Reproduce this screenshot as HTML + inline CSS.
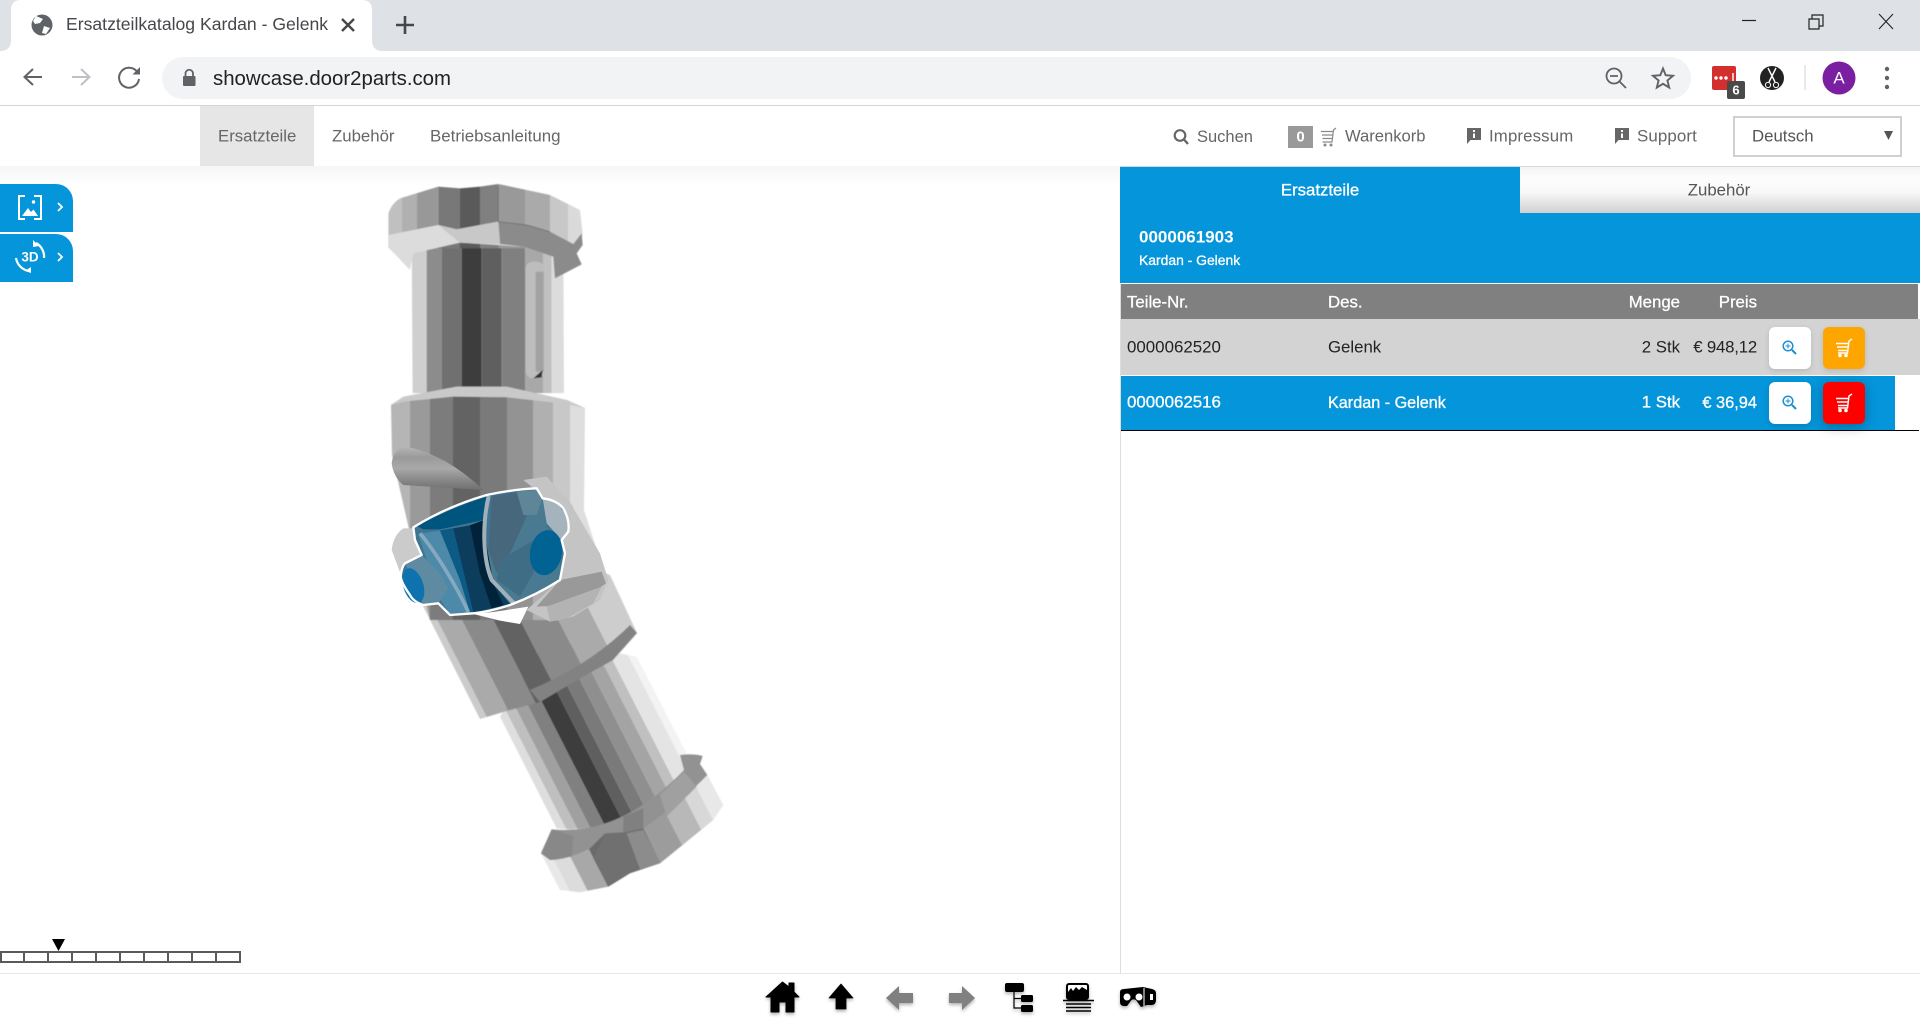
<!DOCTYPE html>
<html lang="de"><head><meta charset="utf-8"><title>Ersatzteilkatalog Kardan - Gelenk</title>
<style>
html,body{margin:0;padding:0;width:1920px;height:1020px;overflow:hidden;background:#fff}
body{position:relative;font-family:"Liberation Sans",Arial,sans-serif;color:#666}
.b{position:absolute}
.t{position:absolute;white-space:nowrap;line-height:1;margin-top:1px;transform:translateY(-50%);font-size:16.8px}
.r{transform:translate(-100%,-50%)}
.c{transform:translate(-50%,-50%)}
.w{color:#fff;-webkit-text-stroke:.3px #fff}
svg{position:absolute;left:0;top:0}
</style></head><body>
<!-- browser chrome -->
<div class="b" style="left:0;top:0;width:1920px;height:51px;background:#dee1e6"></div>
<div class="b" style="left:0;top:51px;width:1920px;height:54px;background:#fff"></div>
<div class="b" style="left:0;top:105px;width:1920px;height:1px;background:#d6d6d6"></div>
<div class="b" style="left:162px;top:57px;width:1529px;height:42px;border-radius:21px;background:#f1f3f4"></div>
<!-- app nav -->
<div class="b" style="left:200px;top:106px;width:114px;height:60px;background:#e6e6e6"></div>
<div class="b" style="left:0;top:166px;width:1120px;height:20px;background:linear-gradient(#f6f6f6,#fff)"></div>
<div class="b" style="left:1733px;top:116px;width:165px;height:37px;border:2px solid #d0d0d0"></div>
<div class="b" style="left:1288px;top:126px;width:25px;height:22px;background:#999"></div>
<!-- left tools -->
<div class="b" style="left:0;top:184px;width:73px;height:48px;background:#0595da;border-top-right-radius:17px"></div>
<div class="b" style="left:0;top:234px;width:73px;height:48px;background:#0595da;border-top-right-radius:17px"></div>
<!-- right panel -->
<div class="b" style="left:1120px;top:167px;width:1px;height:806px;background:#ddd"></div>
<div class="b" style="left:1120px;top:166px;width:800px;height:1px;background:#d8d8d8"></div>
<div class="b" style="left:1120px;top:167px;width:400px;height:46px;background:#0595da"></div>
<div class="b" style="left:1520px;top:167px;width:400px;height:46px;background:linear-gradient(#f4f4f4 0,#fdfdfd 25%,#f8f8f8 55%,#d0d0d0 100%)"></div>
<div class="b" style="left:1120px;top:213px;width:800px;height:70px;background:#0595da"></div>
<div class="b" style="left:1121px;top:284px;width:797px;height:35px;background:#808080"></div>
<div class="b" style="left:1121px;top:319px;width:799px;height:56px;background:#d3d3d3"></div>
<div class="b" style="left:1121px;top:376px;width:774px;height:54px;background:#0595da"></div>
<div class="b" style="left:1121px;top:430px;width:798px;height:1px;background:#000"></div>
<div class="b" style="left:1769px;top:327px;width:42px;height:42px;border-radius:6px;background:#fff;box-shadow:0 2px 6px rgba(0,0,0,.12)"></div>
<div class="b" style="left:1823px;top:327px;width:42px;height:42px;border-radius:6px;background:#ffa500;box-shadow:0 2px 6px rgba(0,0,0,.12)"></div>
<div class="b" style="left:1769px;top:382px;width:42px;height:42px;border-radius:6px;background:#fff;box-shadow:0 2px 6px rgba(0,0,0,.15)"></div>
<div class="b" style="left:1823px;top:382px;width:42px;height:42px;border-radius:6px;background:#f00;box-shadow:0 3px 12px rgba(0,0,0,.28)"></div>
<!-- bottom -->
<div class="b" style="left:0;top:973px;width:1920px;height:1px;background:#e6e6e6"></div>

<svg width="1920" height="1020" viewBox="0 0 1920 1020" xmlns="http://www.w3.org/2000/svg">
<defs>
<clipPath id="cNeck"><path transform="translate(480,660) scale(.3333)" d="M60,170 L230,505 Q420,530 612,330 L625,290 L470,-10 L200,-60 Z"/></clipPath>
<clipPath id="cFl"><path transform="translate(480,660) scale(.3333)" d="M183,580 L215,508 Q420,530 612,330 L600,285 L668,288 L660,312 L682,345 L730,435 L700,480 L540,610 L450,640 L385,680 L300,697 L240,690 Z"/></clipPath>
<clipPath id="cLow"><path d="M420,600 L480,719 L510,710 L540,702 L577,680 L613,660 L637,633 L610,575 L500,530 L420,560 Z"/></clipPath>
<clipPath id="cUp"><path d="M391,405 L405,397 L455,387 L507,387 L567,400 L585,408 L584,510 L600,560 L560,620 L430,620 L400,490 L392,455 Z"/></clipPath>
<clipPath id="cCap"><path d="M85,130 Q95,100 120,85 L235,50 L300,55 L360,50 L415,42 L500,60 L570,75 L660,120 L668,190 L662,235 L85,235 Z"/></clipPath>
<clipPath id="cN2"><path d="M155,210 L610,210 L612,670 L158,670 Z"/></clipPath>
<linearGradient id="gFlap" x1="0" y1="0" x2="0" y2="1">
<stop offset="0" stop-color="#b5b5b5"/><stop offset=".25" stop-color="#9a9a9a"/><stop offset=".5" stop-color="#a9a9a9"/><stop offset=".75" stop-color="#8a8a8a"/><stop offset="1" stop-color="#6f6f6f"/>
</linearGradient>
<filter id="soft"><feGaussianBlur stdDeviation=".55"/></filter>
<filter id="ds" x="-30%" y="-30%" width="160%" height="170%"><feDropShadow dx="0" dy="2" stdDeviation="1.6" flood-color="#000" flood-opacity=".3"/></filter>
</defs>

<!-- chrome tab -->
<path d="M0,51 Q11,51 11,40 L11,10 Q11,0 21,0 L362,0 Q372,0 372,10 L372,40 Q372,51 383,51 Z" fill="#fff"/>
<circle cx="42" cy="25" r="10.5" fill="#5f6368"/>
<path d="M36,16 L43,19 L40,23 L35,24 L33,21 Z M44,26 L50,28 L46,34 L42,33 Z" fill="#fff"/>
<path d="M342,19 L354,31 M354,19 L342,31" stroke="#45474a" stroke-width="2.4" fill="none"/>
<path d="M405,16 V34 M396,25 H414" stroke="#45474a" stroke-width="2.6" fill="none"/>
<!-- window controls -->
<path d="M1742,20.5 H1756" stroke="#222" stroke-width="1.2"/>
<path d="M1809,19 H1819 V29 H1809 Z M1812,19 V15 H1823 V26 H1819" stroke="#222" stroke-width="1.2" fill="none"/>
<path d="M1879,14 L1893,29 M1893,14 L1879,29" stroke="#222" stroke-width="1.1"/>
<!-- nav icons -->
<path d="M42,77 H25 M33,69 L24.5,77 L33,85" stroke="#5f6368" stroke-width="2" fill="none"/>
<path d="M72,77 H89 M81,69 L89.5,77 L81,85" stroke="#bdc1c6" stroke-width="2" fill="none"/>
<path d="M136.5,71 A10,10 0 1 0 139,79" stroke="#5f6368" stroke-width="2" fill="none"/>
<path d="M140,67 V74.5 H132.5 Z" fill="#5f6368"/>
<rect x="183" y="76" width="12.5" height="10" rx="1" fill="#5f6368"/>
<path d="M185.5,76 V73.5 A3.7,3.7 0 0 1 193,73.5 V76" stroke="#5f6368" stroke-width="1.8" fill="none"/>
<circle cx="1614" cy="76" r="7.5" stroke="#5f6368" stroke-width="1.8" fill="none"/>
<path d="M1619.5,81.5 L1626,88 M1610,76 H1618" stroke="#5f6368" stroke-width="1.8"/>
<path d="M1663,68.5 L1665.7,75.2 L1673,75.8 L1667.4,80.5 L1669.2,87.6 L1663,83.8 L1656.8,87.6 L1658.6,80.5 L1653,75.8 L1660.3,75.2 Z" stroke="#5f6368" stroke-width="1.9" fill="none"/>
<!-- extensions -->
<rect x="1712" y="66" width="24" height="24" rx="2" fill="#d32f2f"/>
<circle cx="1716" cy="78" r="1.7" fill="#fff"/><circle cx="1721" cy="78" r="1.7" fill="#fff"/><circle cx="1726" cy="78" r="1.7" fill="#fff"/>
<path d="M1733,73 V82" stroke="#fff" stroke-width="1.4"/>
<rect x="1727" y="81" width="18" height="18" rx="2" fill="#4a4a4a"/>
<circle cx="1772" cy="78" r="12" fill="#222"/>
<path d="M1768,68 L1775,82 M1776,68 L1769,82" stroke="#fff" stroke-width="1.4"/>
<circle cx="1768" cy="85" r="2.6" fill="none" stroke="#fff" stroke-width="1"/>
<circle cx="1776" cy="85" r="2.6" fill="none" stroke="#fff" stroke-width="1"/>
<path d="M1805,65 V90" stroke="#d0d3d6" stroke-width="1"/>
<circle cx="1839" cy="78" r="16.5" fill="#7b1fa2"/>
<circle cx="1887" cy="69" r="2.2" fill="#5f6368"/><circle cx="1887" cy="78" r="2.2" fill="#5f6368"/><circle cx="1887" cy="87" r="2.2" fill="#5f6368"/>

<!-- app nav icons -->
<circle cx="1180" cy="135.500" r="5.300" fill="none" stroke="#666" stroke-width="2.200"/>
<path d="M1184,139.500 L1188,144" stroke="#666" stroke-width="2.400"/>
<g fill="none" stroke="#8a8a8a" stroke-width="1.200">
<path d="M1336,128 L1333.500,130 L1332,142 H1322.500 M1321,131.500 H1333 M1322,135 H1332.500 M1322.500,138.500 H1332"/>
</g>
<circle cx="1325" cy="145" r="1.500" fill="#8a8a8a"/><circle cx="1331" cy="145" r="1.500" fill="#8a8a8a"/>
<path d="M1467,128 H1481 V140 H1470.500 L1467,144 Z" fill="#666"/>
<path d="M1474,130 V132 M1474,133.500 V138" stroke="#fff" stroke-width="2"/>
<path d="M1615,128 H1629 V140 H1618.500 L1615,144 Z" fill="#666"/>
<path d="M1622,130 V132 M1622,133.500 V138" stroke="#fff" stroke-width="2"/>
<path d="M1884,131 H1893 L1888.500,140 Z" fill="#555"/>

<!-- left tool icons -->
<g fill="none" stroke="#fff" stroke-width="2">
<path d="M25,196 H19 V219 H25 M34,196 H41 V219 H34"/>
</g>
<circle cx="33.500" cy="202" r="1.700" fill="#fff"/>
<path d="M22,216 L28,208 L31,212 L33.500,209.500 L38,216 Z" fill="#fff"/>
<path d="M58,203 L62,207 L58,211 M58,253 L62,257 L58,261" stroke="#fff" stroke-width="1.800" fill="none"/>
<g fill="none" stroke="#fff" stroke-width="2.200">
<path d="M36,243 A15.500,15.500 0 0 1 44,258"/>
<path d="M16,258 A15.500,15.500 0 0 0 29,271"/>
</g>
<path d="M33,240 L39,246 L33,247 Z M31,267 L25,271 L31,273 Z" fill="#fff"/>

<!-- 3D MODEL -->
<g filter="url(#soft)">
<!-- lower neck -->
<g clip-path="url(#cNeck)"><g transform="translate(620,798) rotate(-27)">
<rect x="-72" y="-300" width="10" height="500" fill="#dedede"/>
<rect x="-62" y="-300" width="10" height="500" fill="#bfbfbf"/>
<rect x="-52" y="-300" width="12" height="500" fill="#a0a0a0"/>
<rect x="-40" y="-300" width="14" height="500" fill="#808080"/>
<rect x="-26" y="-300" width="18" height="500" fill="#3e3e3e"/>
<rect x="-8" y="-300" width="12" height="500" fill="#5f5f5f"/>
<rect x="4" y="-300" width="14" height="500" fill="#7a7a7a"/>
<rect x="18" y="-300" width="14" height="500" fill="#8f8f8f"/>
<rect x="32" y="-300" width="14" height="500" fill="#a4a4a4"/>
<rect x="46" y="-300" width="10" height="500" fill="#c0c0c0"/>
<rect x="56" y="-300" width="16" height="500" fill="#e4e4e4"/>
<rect x="72" y="-300" width="30" height="500" fill="#f3f3f3"/>
</g></g>
<!-- lower flange -->
<g clip-path="url(#cFl)"><g transform="translate(620,798) rotate(-27)">
<rect x="-97" y="-100" width="10" height="300" fill="#e8e8e8"/>
<rect x="-87" y="-100" width="16" height="300" fill="#dcdcdc"/>
<rect x="-71" y="-100" width="20" height="300" fill="#a8a8a8"/>
<rect x="-51" y="-100" width="21" height="300" fill="#6a6a6a"/>
<rect x="-30" y="-100" width="19" height="300" fill="#7c7c7c"/>
<rect x="-11" y="-100" width="17" height="300" fill="#909090"/>
<rect x="6" y="-100" width="28" height="300" fill="#9c9c9c"/>
<rect x="34" y="-100" width="24" height="300" fill="#b8b8b8"/>
<rect x="58" y="-100" width="15" height="300" fill="#d8d8d8"/>
<rect x="73" y="-100" width="25" height="300" fill="#e8e8e8"/>
</g></g>
<g transform="translate(480,660) scale(.3333)">
<path d="M183,580 L215,508 Q420,530 612,330 L600,285 Q640,280 668,288 L660,312 L682,345 Q600,430 490,505 L430,517 L375,520 L330,565 Q260,600 210,600 Z" fill="#929292"/>
<path d="M183,580 L215,508 L280,528 L275,590 L210,600 Z" fill="#888"/>
<path d="M430,470 L490,445 L490,505 L430,517 Z" fill="#808080"/>
<path d="M540,405 L612,335 L650,380 L560,470 Z" fill="#a0a0a0"/>
<path d="M375,520 L430,517 L490,505 L540,608 L450,640 L385,680 L340,595 Z" fill="#6f6f6f"/>
<path d="M440,520 L490,510 L540,608 L480,628 Z" fill="#8c8c8c"/>
</g>
<!-- lower collar -->
<g clip-path="url(#cLow)"><g transform="translate(620,798) rotate(-27)">
<rect x="-110" y="-320" width="18" height="300" fill="#dedede"/>
<rect x="-92" y="-320" width="10" height="300" fill="#cbcbcb"/>
<rect x="-82" y="-320" width="22" height="300" fill="#aaa"/>
<rect x="-60" y="-320" width="28" height="300" fill="#8a8a8a"/>
<rect x="-32" y="-320" width="24" height="300" fill="#626262"/>
<rect x="-8" y="-320" width="34" height="300" fill="#8a8a8a"/>
<rect x="26" y="-320" width="32" height="300" fill="#aaa"/>
<rect x="58" y="-320" width="52" height="300" fill="#cdcdcd"/>
</g></g>
<path d="M540,702 L577,680 L613,660 L637,633 L630,625 Q590,665 530,690 Z" fill="#828282"/>
<!-- upper collar -->
<g clip-path="url(#cUp)">
<rect x="388" y="380" width="22" height="250" fill="#b5b5b5"/>
<rect x="410" y="380" width="20" height="250" fill="#9a9a9a"/>
<rect x="430" y="380" width="23" height="250" fill="#7c7c7c"/>
<rect x="453" y="380" width="27" height="250" fill="#646464"/>
<rect x="480" y="380" width="27" height="250" fill="#7a7a7a"/>
<rect x="507" y="380" width="26" height="250" fill="#939393"/>
<rect x="533" y="380" width="20" height="250" fill="#b0b0b0"/>
<rect x="553" y="380" width="17" height="250" fill="#c8c8c8"/>
<rect x="570" y="380" width="35" height="250" fill="#dedede"/>
</g>
<!-- neck -->
<g transform="translate(360,170) scale(.3333)">
<g clip-path="url(#cN2)">
<rect x="155" y="210" width="45" height="470" fill="#cfcfcf"/>
<rect x="200" y="210" width="45" height="470" fill="#8c8c8c"/>
<rect x="245" y="210" width="60" height="470" fill="#707070"/>
<rect x="305" y="210" width="60" height="470" fill="#3c3c3c"/>
<rect x="365" y="210" width="60" height="470" fill="#5f5f5f"/>
<rect x="425" y="210" width="70" height="470" fill="#808080"/>
<rect x="495" y="210" width="55" height="470" fill="#a8a8a8"/>
<rect x="550" y="210" width="25" height="470" fill="#c0c0c0"/>
<rect x="575" y="210" width="37" height="470" fill="#dcdcdc"/>
<rect x="497" y="275" width="55" height="350" rx="22" fill="#bdbdbd"/>
<rect x="527" y="305" width="24" height="300" fill="#a2a2a2"/>
<path d="M520,625 L548,600 L545,622 Z" fill="#333"/>
</g>
<!-- collar ridge -->
<path d="M92,705 L130,680 L290,650 L440,650 L620,690 L676,715 L620,702 L440,682 L280,680 L130,695 Z" fill="#c9c9c9"/>
<!-- top cap -->
<g clip-path="url(#cCap)">
<rect x="80" y="30" width="45" height="210" fill="#c0c0c0"/>
<rect x="125" y="30" width="45" height="210" fill="#b0b0b0"/>
<rect x="170" y="30" width="65" height="210" fill="#989898"/>
<rect x="235" y="30" width="65" height="210" fill="#787878"/>
<rect x="300" y="30" width="60" height="210" fill="#5a5a5a"/>
<rect x="360" y="30" width="55" height="210" fill="#808080"/>
<rect x="415" y="30" width="80" height="210" fill="#999"/>
<rect x="495" y="30" width="75" height="210" fill="#aaa"/>
<rect x="570" y="30" width="55" height="210" fill="#c8c8c8"/>
<rect x="625" y="30" width="45" height="210" fill="#dadada"/>
</g>
<path d="M85,232 L85,195 L235,165 L290,178 L415,155 L500,165 L570,185 L640,222 L665,190 L668,225 L650,250 L665,283 L585,325 L580,260 L490,230 L300,218 L160,250 L150,300 Z" fill="#dcdcdc"/>
<path d="M415,155 L500,165 L570,185 L640,222 L665,190 L668,225 L650,250 L665,283 L585,325 L580,260 L490,230 L420,222 Z" fill="#8b8b8b"/>
<path d="M235,165 L290,178 L415,155 L420,222 L300,218 Z" fill="#c8c8c8"/>
<path d="M415,48 L415,155 L500,165 L570,185" fill="none" stroke="#666" stroke-width="2"/>
</g>
</g>
<!-- joint (zoom coords) -->
<g transform="translate(360,440) scale(.3333)" filter="url(#soft)">
<path d="M620,170 L720,340 L745,420 L720,480 L640,530 L570,545 L500,510 L600,420 Z" fill="#c4c4c4"/>
<path d="M600,420 L725,395 L738,430 L640,495 L530,500 Z" fill="#999"/>
<path d="M560,500 L725,440 L700,490 L620,535 L570,545 Z" fill="#b3b3b3"/>
<path d="M490,120 L560,110 L640,200 L620,240 L540,160 Z" fill="#c4c4c4"/>
<path d="M95,70 Q100,25 140,20 Q260,45 370,150 L130,135 Q100,110 95,70 Z" fill="url(#gFlap)"/>
<path d="M95,330 Q100,285 130,265 L165,265 L185,345 L135,370 L125,410 Z" fill="#cbcbcb"/>
<!-- blue -->
<path d="M160,262 Q260,200 380,165 Q460,148 530,145 L548,175 Q590,180 610,205 Q630,240 625,275 L605,300 L615,340 L600,420 Q530,465 450,495 Q390,515 340,520 L270,525 L235,490 L190,495 Q160,485 150,465 Q125,430 122,410 Q125,380 135,370 L185,345 L165,300 Z" fill="#3f7592"/>
<path d="M548,175 L590,185 L625,235 L625,275 L605,300 L560,250 Z" fill="#a5b4bc"/>
<path d="M395,170 L530,145 L548,175 L560,260 L600,300 L600,420 L470,490 L400,430 L385,330 Z" fill="#4a7a92"/>
<path d="M395,170 L470,155 L500,230 L450,340 L410,400 L385,330 Z" fill="#46687b"/>
<path d="M470,155 L530,150 L545,180 L530,225 L490,225 Z" fill="#5f8599"/>
<path d="M420,360 L540,290 L520,400 L480,470 L410,420 Z" fill="#3f6d86"/>
<path d="M170,258 Q270,205 380,170 L370,240 L240,268 L190,268 Z" fill="#05557f"/>
<path d="M240,272 L330,256 L372,240 L382,330 L400,430 L450,492 L340,518 L290,430 Z" fill="#0a3d5c"/>
<path d="M330,256 L372,240 L382,330 L400,430 L430,495 L395,505 L360,400 Z" fill="#01243a"/>
<path d="M240,272 L280,266 L340,516 L300,520 Z" fill="#0c5a85"/>
<path d="M175,282 L240,272 L300,420 L330,518 L270,522 L235,470 Z" fill="#4d89a8"/>
<path d="M135,370 L185,345 L240,400 L265,445 L235,490 L190,495 Z" fill="#5f8ba2"/>
<ellipse cx="160" cy="437" rx="30" ry="54" transform="rotate(-18 160 437)" fill="#0a72ad"/>
<path d="M180,280 C230,340 290,440 325,516" fill="none" stroke="#93b3c4" stroke-width="11" opacity=".8"/>
<path d="M386,168 C365,260 370,360 395,420 L462,490" fill="none" stroke="#a2b0b8" stroke-width="12"/>
<ellipse cx="558" cy="338" rx="48" ry="68" transform="rotate(10 558 338)" fill="#006494"/>
<path d="M160,262 Q260,200 380,165 Q460,148 530,145 L548,175 Q590,180 610,205 Q630,240 625,275 L605,300 L615,340 L600,420 Q530,465 450,495 Q390,515 340,520 L270,525 L235,490 L190,495 Q160,485 150,465 Q125,430 122,410 Q125,380 135,370 L185,345 L165,300 Z" fill="none" stroke="#fff" stroke-width="7" stroke-linejoin="round"/>
<path d="M340,522 L400,516 L505,500 L480,552 L420,542 Z" fill="#fff"/>
</g>

<!-- scale ruler -->
<path d="M1,952 H240 V962 H1 Z M24,952 V962 M48,952 V962 M72,952 V962 M96,952 V962 M120,952 V962 M144,952 V962 M168,952 V962 M192,952 V962 M216,952 V962" fill="#fff" stroke="#5a5a5a" stroke-width="2"/>
<path d="M52,939 H65 L58.500,951 Z" fill="#000"/>

<!-- bottom toolbar -->
<g filter="url(#ds)">
<path d="M766,997 L782.500,982 L789,987 V983 H794 V992 L799,997 H794 V1012 H786 V1002 H779 V1012 H771 V997 Z" fill="#000" stroke="#000" stroke-linejoin="round"/>
<path d="M841,984 L853,998 H846 V1009 H836 V998 H829 Z" fill="#000" stroke="#000" stroke-width=".8" stroke-linejoin="round"/>
<path d="M886,998 L899,986 V993 H913 V1003 H899 V1010 Z" fill="#808080"/>
<path d="M975,998 L962,986 V993 H949 V1003 H962 V1010 Z" fill="#808080"/>
<rect x="1005" y="983" width="19" height="9" rx="2" fill="#000"/>
<rect x="1021" y="995" width="12" height="7" rx="1.500" fill="#000"/>
<rect x="1021" y="1005" width="12" height="7" rx="1.500" fill="#000"/>
<path d="M1014,992 V1008 H1021 M1014,998.500 H1021" stroke="#000" stroke-width="1.200" fill="none"/>
<rect x="1067" y="984" width="21" height="15" rx="2" fill="#fff" stroke="#000" stroke-width="2"/>
<path d="M1068,998 V992 L1071,988 L1073,991 L1076,987 L1079,990 L1082,987 L1087,990 V998 Z" fill="#000"/>
<path d="M1063,1000.500 H1094 M1066,1004 H1091 M1066,1007.500 H1091 M1066,1011 H1091" stroke="#000" stroke-width="1.400"/>
<path d="M1120,992 Q1120,989 1124,989 L1143,987 L1152,989 Q1156,990 1156,993 V1000 Q1156,1005 1151,1005 H1147 L1141,1007 L1136,1000 Q1132,998 1130,1002 L1127,1006 H1124 Q1120,1006 1120,1002 Z" fill="#000"/>
<circle cx="1127" cy="997" r="3.500" fill="#fff"/><circle cx="1139" cy="997" r="3.500" fill="#fff"/>
<path d="M1144,988 V1006" stroke="#fff" stroke-width="1"/>
<rect x="1150" y="994" width="3" height="6" fill="#fff"/>
</g>

<!-- magnifiers & carts -->
<g fill="none" stroke="#1b8fd0" stroke-width="1.500">
<circle cx="1788" cy="346" r="4.800"/><path d="M1792,350 L1796,354" stroke-width="2"/><path d="M1785.500,346 H1790.500 M1788,343.500 V348.500" stroke-width="1"/>
<circle cx="1788" cy="401" r="4.800"/><path d="M1792,405 L1796,409" stroke-width="2"/><path d="M1785.500,401 H1790.500 M1788,398.500 V403.500" stroke-width="1"/>
</g>
<g fill="none" stroke="#fff" stroke-width="1.400">
<path d="M1852,339 L1849,341 L1847.500,353 H1838 M1836,343.500 H1849 M1837,347 H1848.500 M1838,350.500 H1848"/>
<path d="M1852,394 L1849,396 L1847.500,408 H1838 M1836,398.500 H1849 M1837,402 H1848.500 M1838,405.500 H1848"/>
</g>
<g fill="#fff"><circle cx="1840" cy="355.500" r="1.800"/><circle cx="1846" cy="355.500" r="1.800"/><circle cx="1840" cy="410.500" r="1.800"/><circle cx="1846" cy="410.500" r="1.800"/></g>
</svg>

<!-- TEXT -->
<span class="t" style="left:66px;top:24px;font-size:17.600px;color:#45474a">Ersatzteilkatalog Kardan - Gelenk</span>
<span class="t" style="left:213px;top:78px;font-size:20.400px;color:#202124">showcase.door2parts.com</span>
<span class="t c" style="left:1839px;top:77px;font-size:17px;color:#fff">A</span>
<span class="t" style="left:1727px;top:89px;width:18px;text-align:center;font-size:13px;font-weight:bold;color:#fff">6</span>
<span class="t c" style="left:30px;top:256px;font-size:13.500px;font-weight:bold;color:#fff">3D</span>

<span class="t" style="left:218px;top:136px">Ersatzteile</span>
<span class="t" style="left:332px;top:136px">Zubehör</span>
<span class="t" style="left:430px;top:136px;font-size:16.900px">Betriebsanleitung</span>
<span class="t" style="left:1197px;top:136px;font-size:16.500px">Suchen</span>
<span class="t c" style="left:1300.500px;top:136px;font-size:15px;font-weight:bold;color:#fff">0</span>
<span class="t" style="left:1345px;top:136px;font-size:16.600px">Warenkorb</span>
<span class="t" style="left:1489px;top:136px;font-size:16.800px;letter-spacing:.15px">Impressum</span>
<span class="t" style="left:1637px;top:136px;font-size:16.900px;letter-spacing:.1px">Support</span>
<span class="t" style="left:1752px;top:136px;color:#555">Deutsch</span>

<span class="t c w" style="left:1320px;top:190px">Ersatzteile</span>
<span class="t c" style="left:1719px;top:190px;color:#555">Zubehör</span>
<span class="t" style="left:1139px;top:236px;font-weight:bold;font-size:17px;color:#fff">0000061903</span>
<span class="t w" style="left:1139px;top:260px;font-size:13.900px">Kardan - Gelenk</span>

<span class="t w" style="left:1127px;top:302px">Teile-Nr.</span>
<span class="t w" style="left:1328px;top:302px">Des.</span>
<span class="t r w" style="left:1680px;top:302px">Menge</span>
<span class="t r w" style="left:1757px;top:302px">Preis</span>

<span class="t" style="left:1127px;top:347px;color:#222;font-size:16.900px">0000062520</span>
<span class="t" style="left:1328px;top:347px;color:#222">Gelenk</span>
<span class="t r" style="left:1680px;top:347px;color:#222">2 Stk</span>
<span class="t r" style="left:1757px;top:347px;color:#222;letter-spacing:-.2px">€ 948,12</span>

<span class="t w" style="left:1127px;top:402px;font-size:16.900px">0000062516</span>
<span class="t w" style="left:1328px;top:402px;font-size:16.200px">Kardan - Gelenk</span>
<span class="t r w" style="left:1680px;top:402px">1 Stk</span>
<span class="t r w" style="left:1757px;top:402px;font-size:16.400px">€ 36,94</span>
</body></html>
